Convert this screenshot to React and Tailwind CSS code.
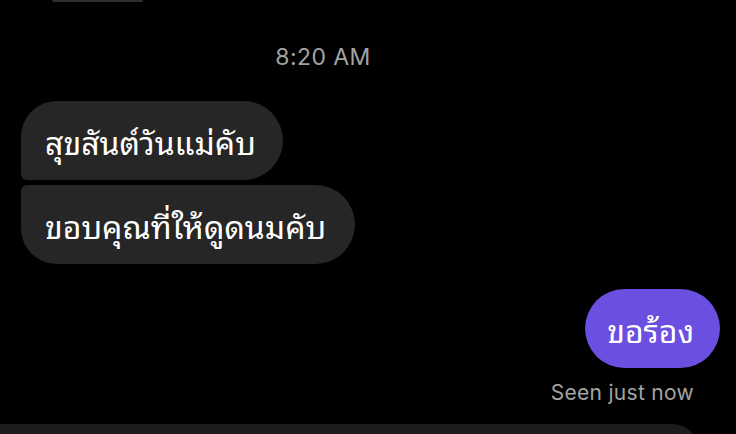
export default function App() {
  const thai = { fontFamily: '"Noto Sans Thai Looped", "Noto Serif Thai", "Loma", "Garuda", "Noto Sans Thai", "Noto Sans", sans-serif' };
  return (
    <div className="w-[736px] h-[434px] bg-black overflow-hidden flex flex-col" style={{ fontFamily: 'Inter, "Liberation Sans", sans-serif' }}>
      <div className="ml-[52px] w-[91px] h-[2px] shrink-0 bg-[#2e2e2e] rounded-b-full" />
      <div className="w-[646px] flex justify-center mt-[42px] h-[26px] shrink-0 items-center">
        <span className="text-[23px] text-[#a3a3a3] tracking-[0.4px]">8:20 AM</span>
      </div>
      <div className="flex flex-col items-start gap-[5px] mt-[31px] ml-[21px]">
        <div className="h-[79px] flex items-center pl-[24px] pr-[27px] bg-[#262626] rounded-tl-[36px] rounded-bl-[6px] rounded-r-[40px]">
          <span className="text-[32px] text-white" style={thai}>สุขสันต์วันแม่คับ</span>
        </div>
        <div className="h-[79px] flex items-center pl-[24px] pr-[29px] bg-[#262626] rounded-tl-[6px] rounded-bl-[36px] rounded-r-[40px]">
          <span className="text-[32px] text-white" style={thai}>ขอบคุณที่ให้ดูดนมคับ</span>
        </div>
      </div>
      <div className="flex justify-end pr-[16px] mt-[25px]">
        <div className="h-[79px] flex items-center pl-[22px] pr-[26px] bg-[#6a4fe0] rounded-full">
          <span className="text-[32px] text-white" style={thai}>ขอร้อง</span>
        </div>
      </div>
      <div className="flex justify-end pr-[42px] mt-[13px] h-[24px] shrink-0 items-center">
        <span className="text-[21px] text-[#a3a3a3] tracking-[0.3px]">Seen just now</span>
      </div>
      <div className="mt-[19px] w-[700px] h-[40px] shrink-0 bg-[#1c1c1c] rounded-tr-[28px]" />
    </div>
  );
}
